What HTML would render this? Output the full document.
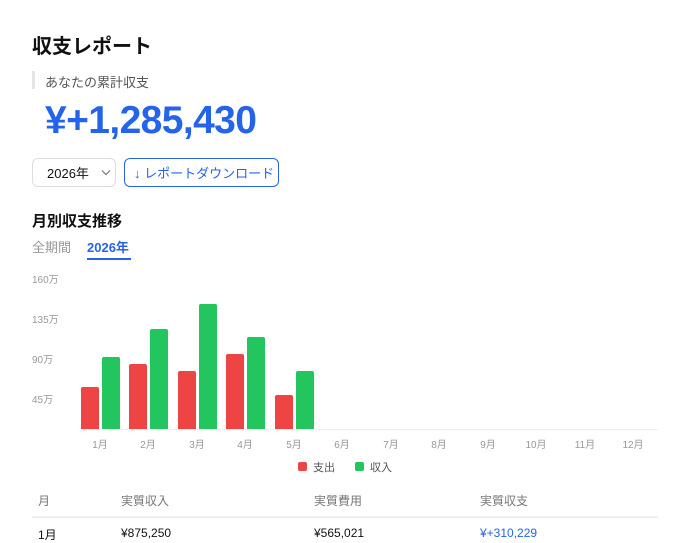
<!DOCTYPE html>
<html><head><meta charset="utf-8"><style>
*{margin:0;padding:0;box-sizing:border-box}
body{width:690px;height:540px;background:#fff;font-family:"Liberation Sans","Noto Sans CJK JP",sans-serif;position:relative;overflow:hidden;color:#111}
.a{position:absolute;white-space:nowrap}
.bar{position:absolute;border-radius:2px 2px 0 0}
.r{background:#ef4444}.g{background:#22c55e}
.yl{position:absolute;left:32px;font-size:10px;color:#999}
.xl{position:absolute;top:436px;font-size:10px;color:#999;width:30px;text-align:center}
.th{position:absolute;top:492px;font-size:12px;color:#777}
.td{position:absolute;top:526px;font-size:12px;color:#111}
</style></head><body>
<div class="a" style="left:32px;top:30px;font-size:20px;font-weight:bold">収支レポート</div>
<div class="a" style="left:32px;top:71px;width:3px;height:18px;background:#e5e5e5"></div>
<div class="a" style="left:45px;top:72px;font-size:13px;color:#555">あなたの累計収支</div>
<div class="a" style="left:45px;top:99px;font-size:39px;font-weight:bold;color:#2563eb;letter-spacing:-0.6px">¥+1,285,430</div>
<div class="a" style="left:32px;top:158px;width:84px;height:29px;border:1px solid #ddd;border-radius:6px;background:#fff"></div>
<div class="a" style="left:47px;top:163px;font-size:13px">2026年</div>
<svg class="a" style="left:101px;top:169px" width="10" height="7"><path d="M1 1.5 L5 5.5 L9 1.5" fill="none" stroke="#777" stroke-width="1.2"/></svg>
<div class="a" style="left:124px;top:158px;width:155px;height:29px;border:1px solid #2563eb;border-radius:6px"></div>
<div class="a" style="left:134px;top:163px;font-size:13px;color:#2563eb">↓ レポートダウンロード</div>
<div class="a" style="left:32px;top:210px;font-size:15px;font-weight:bold">月別収支推移</div>
<div class="a" style="left:32px;top:237px;font-size:13px;color:#999">全期間</div>
<div class="a" style="left:87px;top:237px;font-size:13px;color:#2563eb;font-weight:bold">2026年</div>
<div class="a" style="left:87px;top:258px;width:44px;height:2px;background:#2563eb"></div>
<div class="yl" style="top:271px">160万</div>
<div class="yl" style="top:311px">135万</div>
<div class="yl" style="top:351px">90万</div>
<div class="yl" style="top:391px">45万</div>
<div class="a" style="left:80px;top:429px;width:578px;height:1px;background:#eee"></div>
<div class="bar r" style="left:81px;top:387px;width:18px;height:42px"></div>
<div class="bar g" style="left:102px;top:357px;width:18px;height:72px"></div>
<div class="bar r" style="left:129px;top:364px;width:18px;height:65px"></div>
<div class="bar g" style="left:150px;top:329px;width:18px;height:100px"></div>
<div class="bar r" style="left:178px;top:371px;width:18px;height:58px"></div>
<div class="bar g" style="left:199px;top:304px;width:18px;height:125px"></div>
<div class="bar r" style="left:226px;top:354px;width:18px;height:75px"></div>
<div class="bar g" style="left:247px;top:337px;width:18px;height:92px"></div>
<div class="bar r" style="left:275px;top:395px;width:18px;height:34px"></div>
<div class="bar g" style="left:296px;top:371px;width:18px;height:58px"></div>
<div class="xl" style="left:85px">1月</div><div class="xl" style="left:133px">2月</div><div class="xl" style="left:182px">3月</div><div class="xl" style="left:230px">4月</div><div class="xl" style="left:279px">5月</div><div class="xl" style="left:327px">6月</div><div class="xl" style="left:376px">7月</div><div class="xl" style="left:424px">8月</div><div class="xl" style="left:473px">9月</div><div class="xl" style="left:521px">10月</div><div class="xl" style="left:570px">11月</div><div class="xl" style="left:618px">12月</div>
<div class="a" style="left:298px;top:462px;width:9px;height:9px;background:#ef4444;border-radius:2px"></div>
<div class="a" style="left:313px;top:459px;font-size:11px;color:#555">支出</div>
<div class="a" style="left:355px;top:462px;width:9px;height:9px;background:#22c55e;border-radius:2px"></div>
<div class="a" style="left:370px;top:459px;font-size:11px;color:#555">収入</div>
<div class="th" style="left:38px">月</div>
<div class="th" style="left:121px">実質収入</div>
<div class="th" style="left:314px">実質費用</div>
<div class="th" style="left:480px">実質収支</div>
<div class="a" style="left:32px;top:516px;width:626px;height:2px;background:#f0f0f0"></div>
<div class="td" style="left:38px">1月</div>
<div class="td" style="left:121px">¥875,250</div>
<div class="td" style="left:314px">¥565,021</div>
<div class="td" style="left:480px;color:#2563eb">¥+310,229</div>
</body></html>
